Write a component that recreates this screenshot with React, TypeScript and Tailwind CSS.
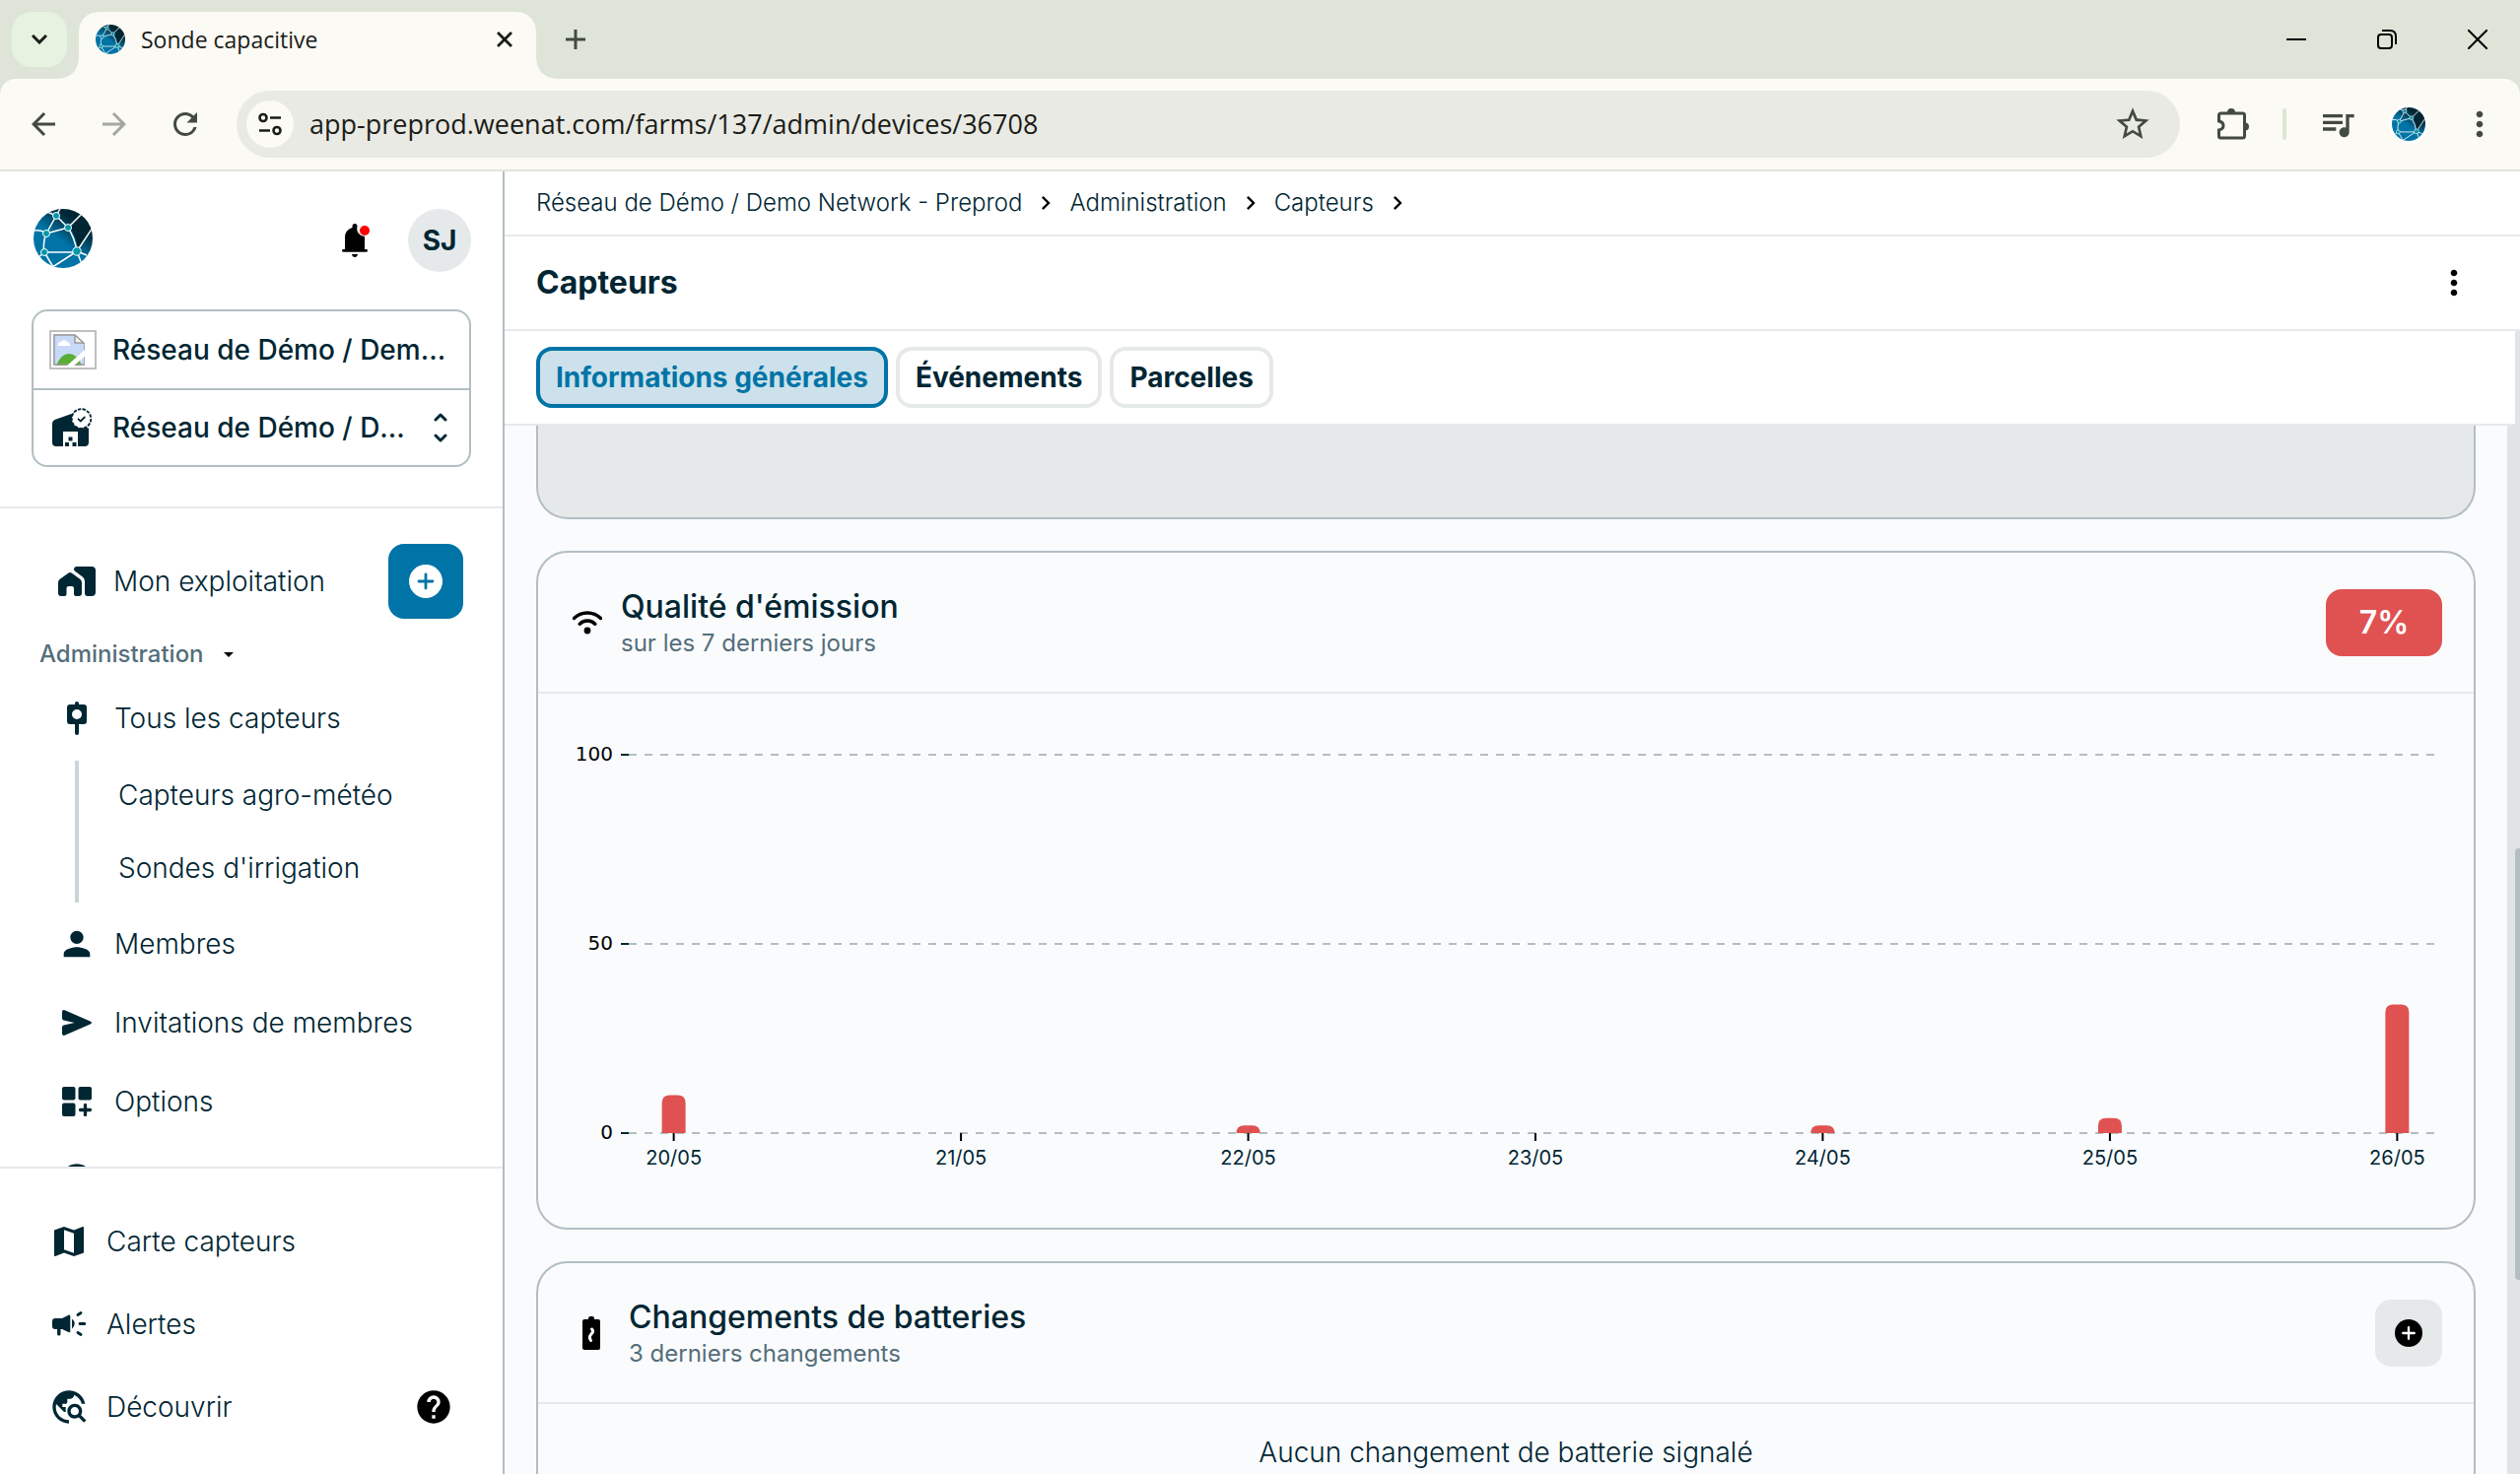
import type { ReactNode } from 'react'
import {
  MdArrowBack,
  MdArrowForward,
  MdChevronRight,
  MdHelp,
  MdMap,
  MdMoreVert,
  MdPerson,
  MdQueueMusic,
  MdRefresh,
  MdStarBorder,
  MdTravelExplore,
} from 'react-icons/md'

const INK = 'text-[#002633]'

function Logo({ id, className }: { id: string; className: string }) {
  return (
    <svg viewBox="0 0 60 60" className={className} aria-hidden="true">
      <defs>
        <linearGradient id={`${id}-fill`} x1="0.3" y1="0.7" x2="0.75" y2="0.1">
          <stop offset="0.3" stopColor="#0074a6" />
          <stop offset="0.85" stopColor="#002633" />
        </linearGradient>
        <clipPath id={`${id}-clip`}>
          <circle cx="30" cy="30" r="30" />
        </clipPath>
      </defs>
      <g clipPath={`url(#${id}-clip)`}>
        <rect width="60" height="60" fill={`url(#${id}-fill)`} />
        <path d="M48 7Q60 14 58 22L45 41Q43 27 38 19z" fill="#002633" />
        <g fill="none" stroke="#fff" strokeWidth="1.500">
          <path d="M23 7L27 0M23 7L13 25M23 7L35 19M13 25L35 19M13 25Q8 21 0 22M13 25Q9 34 11 44M11 44H44M11 44L2 52M11 44L20 59M35 19L48 6M35 19Q42 30 44 43M44 43L62 16M44 43L18 60M44 43L54 47M44 43L49 56M23 7L14 3" />
        </g>
        <g fill="#0097a7" stroke="#fff" strokeWidth="1">
          <circle cx="23" cy="7" r="3.500" />
          <circle cx="35" cy="19" r="3.500" />
          <circle cx="13" cy="25" r="3.500" />
          <circle cx="11" cy="44" r="3.500" />
          <circle cx="44" cy="43" r="4.200" />
        </g>
      </g>
    </svg>
  )
}

function PlusCircle({ className, plus }: { className: string; plus: string }) {
  return (
    <svg viewBox="0 0 34 34" className={className} aria-hidden="true">
      <circle cx="17" cy="17" r="17" fill="currentColor" />
      <path d="M17 10v14M10 17h14" stroke={plus} strokeWidth="2.800" strokeLinecap="round" />
    </svg>
  )
}

function HomeWorkIcon() {
  return (
    <svg viewBox="0 0 38 30" className="h-[30px] w-[38px]" fill="currentColor" aria-hidden="true">
      <path d="M0 16.500q0-2.500 1.800-3.700L10.200 6.700q1.900-1.300 3.800 0l8.200 6.100q1.800 1.200 1.800 3.700V27q0 3-3 3h-3q-2 0-2-2v-6q0-2-2-2h-3.500q-2 0-2 2v6q0 2-2 2H3q-3 0-3-3z" />
      <path d="M16 3q0-3 3-3h15q4 0 4 4v22q0 4-4 4h-4q-3 0-3-3V15q0-3-2.200-4.600L17.500 5Q16 4 16 3z" />
    </svg>
  )
}

function ProbeIcon() {
  return (
    <svg viewBox="0 0 20 34" className="h-[34px] w-5" fill="currentColor" aria-hidden="true">
      <path d="M8 2q0-2 2-2t2 2v1h5q3 0 3 3v14q0 3-3 3h-5v9q0 2-2 2t-2-2v-9H3q-3 0-3-3V6q0-3 3-3h5zM10 8a5 5 0 1 0 0 10a5 5 0 1 0 0-10z" fillRule="evenodd" />
    </svg>
  )
}

function SendIcon() {
  return (
    <svg viewBox="0 0 30 26" className="h-[26px] w-[30px]" fill="currentColor" aria-hidden="true">
      <path d="M0 2.200Q0-.700 2.700.300L28.500 11.500q3 1.500 0 3L2.700 25.700Q0 26.700 0 23.800V17.500q0-1.600 1.600-2L12.500 13 1.600 10.500Q0 10.100 0 8.500z" />
    </svg>
  )
}

function WidgetsIcon() {
  return (
    <svg viewBox="0 0 30 30" className="size-[30px]" fill="currentColor" aria-hidden="true">
      <rect width="13.500" height="13.500" rx="2" />
      <rect x="16.500" width="13.500" height="13.500" rx="2" />
      <rect y="16.500" width="13.500" height="13.500" rx="2" />
      <path d="M23.500 18.500v10M18.500 23.500h10" stroke="currentColor" strokeWidth="3.300" strokeLinecap="round" />
    </svg>
  )
}

function MegaphoneIcon() {
  return (
    <svg viewBox="0 0 34 26" className="h-[26px] w-[34px]" fill="currentColor" aria-hidden="true">
      <path d="M0 10q0-3 3-3h7l6.500-3.300q1.800-.9 1.800 1V20q0 1.900-1.800 1L10 18H8.500v5.500q0 1-1.700 1t-1.700-1V18H3q-3 0-3-3z" />
      <path d="M20 7.500q2.700 2 2.700 5t-2.700 5z" />
      <path d="M26 3.500l3-2M28 12.500h5M26 21.500l3 2" stroke="currentColor" strokeWidth="2.800" strokeLinecap="round" />
    </svg>
  )
}

function BellIcon() {
  return (
    <svg viewBox="0 0 28 34" className="h-[34px] w-7" aria-hidden="true">
      <path d="M1.500 26H3V14Q3 6.500 10.500 4V2.500Q10.500 0 13 0t2.500 2.500V3q-1 4 1.500 7 2.500 3 6 3v13h1.500q1.500 0 1.500 1.400t-1.500 1.400h-23Q0 28.800 0 27.400T1.500 26zM10 31h6q-.5 3-3 3t-3-3z" />
      <circle cx="23" cy="7" r="5" fill="red" />
    </svg>
  )
}

function BarnIcon() {
  return (
    <svg viewBox="0 0 42 40" className="h-10 w-[42px]" aria-hidden="true">
      <path d="M1 16q0-3 2.600-4L19 6.500l4-1 1 6q3 8 14 9V35q0 4-4 4h-7V24H12v15H5q-4 0-4-4z" fill="#002633" />
      <path d="M17.500 29.500h4v4h-4zM14 35h4v4h-4zM21.500 35h4v4h-4z" fill="#002633" />
      <circle cx="30.500" cy="11" r="9.800" fill="#fff" stroke="#002633" strokeWidth="1.800" strokeDasharray="3.400 1.300" />
      <path d="M27.500 11.300l2.300 2.200 4-4" fill="none" stroke="#002633" strokeWidth="1.800" strokeLinecap="round" />
    </svg>
  )
}

function BrokenImage() {
  return (
    <span className="flex h-10 w-12 shrink-0 border-2 border-[#c0c0c0] p-0.5">
      <svg viewBox="0 0 32 32" className="size-8" aria-hidden="true">
        <path d="M0 0h22l10 10v22H0z" fill="#c8daf7" />
        <path d="M3 32q5-12 13-12t13 12z" fill="#5aad35" />
        <path d="M5 12q-1-4 3-4 3-4 6 0 3 0 3 4z" fill="#fff" />
        <path d="M22 1v8h9z" fill="#f4f4f4" />
        <path d="M32 31V10L22 1H1v30h31M22 1v8h9" fill="none" stroke="#9a9a9a" strokeWidth="1.500" />
        <path d="M13 33L33 15v7L20 33z" fill="#fff" />
      </svg>
    </span>
  )
}

function WifiIcon() {
  return (
    <svg viewBox="0 0 30 24" className="h-6 w-[30px]" aria-hidden="true">
      <path d="M1.500 7.500Q7 2 15 2t13.500 5.500M7.200 13.300Q10 10 15 10t7.800 3.300" fill="none" stroke="#000" strokeWidth="3.400" strokeLinecap="round" />
      <circle cx="15" cy="20" r="3.400" />
    </svg>
  )
}

function BatteryIcon() {
  return (
    <svg viewBox="0 0 18 34" className="h-[34px] w-[18px]" aria-hidden="true">
      <path d="M6 2q0-2 2-2h2q2 0 2 2v1h4q2 0 2 2v27q0 2-2 2H2q-2 0-2-2V5q0-2 2-2h4z" />
      <path d="M9.500 13q2.500 2-.5 5t-.5 6.500" fill="none" stroke="#fff" strokeWidth="3" strokeLinecap="round" />
    </svg>
  )
}

function TabStrip() {
  return (
    <div className="flex h-20 items-end pl-3 font-['Open_Sans','Noto_Sans',sans-serif] text-[#1b1c18]">
      <button aria-label="Rechercher dans les onglets" className="mb-3 flex size-14 items-center justify-center rounded-[20px] bg-[#e6f3e1]">
        <svg viewBox="0 0 16 10" className="h-2.5 w-4" fill="none" stroke="currentColor" strokeWidth="3" aria-hidden="true">
          <path d="M1 1l7 7 7-7" />
        </svg>
      </button>
      <div className="relative ml-3 flex h-[68px] w-[464px] items-center rounded-t-[20px] bg-[#fbfaf5] pb-3 pl-[17px] pr-6">
        <svg viewBox="0 0 24 24" className="absolute -left-6 bottom-0 size-6" fill="#fbfaf5" aria-hidden="true">
          <path d="M24 0v24H0Q24 24 24 0z" />
        </svg>
        <svg viewBox="0 0 24 24" className="absolute -right-6 bottom-0 size-6" fill="#fbfaf5" aria-hidden="true">
          <path d="M0 0v24h24Q0 24 0 0z" />
        </svg>
        <Logo id="favicon" className="size-[30px]" />
        <span className="ml-4 flex-1 text-[23px] leading-8">Sonde capacitive</span>
        <button aria-label="Fermer l'onglet">
          <svg viewBox="0 0 16 16" className="size-4" stroke="currentColor" strokeWidth="2.800" aria-hidden="true">
            <path d="M1 1l14 14M15 1L1 15" />
          </svg>
        </button>
      </div>
      <button aria-label="Nouvel onglet" className="mb-[30px] ml-[30px] text-[#434a42]">
        <svg viewBox="0 0 20 20" className="size-5" stroke="currentColor" strokeWidth="3" aria-hidden="true">
          <path d="M10 0v20M0 10h20" />
        </svg>
      </button>
      <div className="mb-[30px] ml-auto mr-[33px] flex items-center gap-[72px] text-black">
        <button aria-label="Réduire">
          <svg viewBox="0 0 20 20" className="size-5" stroke="currentColor" strokeWidth="2" aria-hidden="true">
            <path d="M0 10h20" />
          </svg>
        </button>
        <button aria-label="Restaurer">
          <svg viewBox="0 0 20 20" className="size-5" fill="none" stroke="currentColor" strokeWidth="2" aria-hidden="true">
            <rect x="1" y="5" width="14" height="14" rx="3" />
            <path d="M5 1h8q6 0 6 6v8" />
          </svg>
        </button>
        <button aria-label="Fermer">
          <svg viewBox="0 0 20 20" className="size-5" stroke="currentColor" strokeWidth="2" aria-hidden="true">
            <path d="M0 0l20 20M20 0L0 20" />
          </svg>
        </button>
      </div>
    </div>
  )
}

function Toolbar() {
  return (
    <div className="flex h-[94px] items-center rounded-t-[16px] border-b-2 border-[#e3e3df] bg-[#fbfaf5] pr-[21px] text-[#434a42]">
      <div className="flex items-center gap-9 pl-[26px]">
        <button aria-label="Précédent"><MdArrowBack className="size-9" /></button>
        <button aria-label="Suivant" className="text-[#a5a6a2]"><MdArrowForward className="size-9" /></button>
        <button aria-label="Actualiser"><MdRefresh className="size-9" /></button>
      </div>
      <div className="ml-[34px] flex h-[68px] flex-1 items-center rounded-full bg-[#e9eae4] pl-2.5 pr-7">
        <button aria-label="Informations sur le site" className="flex size-12 items-center justify-center rounded-full bg-[#fbfaf5] text-[#1b1c18]">
          <svg viewBox="0 0 24 24" className="size-6" fill="none" stroke="currentColor" strokeWidth="2.600" aria-hidden="true">
            <circle cx="5" cy="5.500" r="3.500" />
            <circle cx="19" cy="18.500" r="3.500" />
            <path d="M12 5.500h11M1 18.500h11" />
          </svg>
        </button>
        <input
          aria-label="Adresse"
          defaultValue="app-preprod.weenat.com/farms/137/admin/devices/36708"
          className="ml-4 flex-1 bg-transparent font-['Open_Sans','Noto_Sans',sans-serif] text-[27px] leading-10 text-[#1b1c18] outline-none"
        />
        <button aria-label="Ajouter aux favoris"><MdStarBorder className="size-10" /></button>
      </div>
      <button aria-label="Extensions" className="ml-[38px]">
        <svg viewBox="0 0 32 32" className="size-8" fill="none" stroke="currentColor" strokeWidth="3" aria-hidden="true">
          <path d="M1.500 13V7q0-2 2-2h22q2 0 2 2v21q0 2-2 2h-22q-2 0-2-2v-6q4.500-1 4.500-4.500T1.500 13z" />
          <path d="M10 4a4 4 0 0 1 8 0zM28 14.500a4 4 0 0 1 0 8z" fill="currentColor" stroke="none" />
        </svg>
      </button>
      <span className="ml-[34px] h-8 w-1 rounded-full bg-[#dbe6d5]" />
      <button aria-label="Médias" className="ml-8"><MdQueueMusic className="size-10" /></button>
      <button aria-label="Profil" className="ml-8 rounded-full bg-white p-[3px]">
        <Logo id="profile" className="size-[34px]" />
      </button>
      <button aria-label="Menu" className="ml-8"><MdMoreVert className="size-10" /></button>
    </div>
  )
}

function NavItem({ icon, label }: { icon: ReactNode; label: string }) {
  return (
    <a href="#" className="flex h-20 items-center pl-[58px]">
      <span className="flex w-10 justify-center">{icon}</span>
      <span className="ml-[18px]">{label}</span>
    </a>
  )
}

const FOOTER_LINKS = [
  { label: 'Carte capteurs', icon: <MdMap className="size-10" /> },
  { label: 'Alertes', icon: <MegaphoneIcon /> },
  { label: 'Découvrir', icon: <MdTravelExplore className="size-10" /> },
]

function Sidebar() {
  return (
    <aside className={`flex w-[512px] shrink-0 flex-col border-r-2 border-[#b2bec3] bg-white ${INK}`}>
      <div className="border-b-2 border-[#e6e9ea] px-8 pb-10 pt-[38px]">
        <div className="flex items-center">
          <Logo id="brand" className="ml-0.5 size-[60px] self-start" />
          <button aria-label="Notifications" className="ml-auto"><BellIcon /></button>
          <button className="ml-[39px] size-16 rounded-full bg-[#e6e9ea] text-[28px] font-bold">SJ</button>
        </div>
        <div className="mt-[38px] divide-y-2 divide-[#b2bec3] rounded-[16px] border-2 border-[#b2bec3] text-[28px] font-medium leading-9">
          <button className="flex h-20 w-full items-center pl-4 pr-2 text-left">
            <BrokenImage />
            <span className="ml-4 w-[348px] truncate">Réseau de Démo / Demo Network - Preprod</span>
          </button>
          <button className="flex h-[76px] w-full items-center pl-[18px] pr-[22px] text-left">
            <BarnIcon />
            <span className="ml-5 w-[300px] truncate">Réseau de Démo / Demo Network</span>
            <svg viewBox="0 0 14 30" className="ml-auto h-[30px] w-3.5" fill="none" stroke="currentColor" strokeWidth="3" strokeLinecap="round" strokeLinejoin="round" aria-hidden="true">
              <path d="M2 7l5-5 5 5M2 23l5 5 5-5" />
            </svg>
          </button>
        </div>
      </div>

      <nav className="min-h-0 flex-1 overflow-hidden pt-9 text-[28px] font-light leading-9">
        <div className="flex h-[76px] items-center pl-[59px] pr-10">
          <a href="#" className="flex items-center">
            <HomeWorkIcon />
            <span className="ml-[18px]">Mon exploitation</span>
          </a>
          <button aria-label="Ajouter" className="ml-auto flex size-[76px] items-center justify-center rounded-[16px] bg-[#0074a6] text-white">
            <PlusCircle className="size-[34px]" plus="#0074a6" />
          </button>
        </div>
        <button className="flex h-[72px] items-center gap-5 pl-10 text-[24px] font-medium text-[#546e7a]">
          Administration
          <svg viewBox="0 0 10 5" className="h-[5px] w-2.5" aria-hidden="true"><path d="M0 0h10L5 5z" /></svg>
        </button>
        <a href="#" className="flex h-[58px] items-center pl-[58px]">
          <span className="flex w-10 justify-center"><ProbeIcon /></span>
          <span className="ml-[18px]">Tous les capteurs</span>
        </a>
        <div className="mb-0.5 ml-[76px] mt-3.5 flex h-36 flex-col justify-between border-l-4 border-[#ccd4d7] pl-10">
          <a href="#" className="flex h-[70px] items-center">Capteurs agro-météo</a>
          <a href="#" className="flex h-[70px] items-center">Sondes d'irrigation</a>
        </div>
        <NavItem icon={<MdPerson className="size-[42px]" />} label="Membres" />
        <NavItem icon={<SendIcon />} label="Invitations de membres" />
        <NavItem icon={<WidgetsIcon />} label="Options" />
        <a href="#" aria-label="Aide" className="flex h-20 items-center pl-[58px]">
          <MdHelp className="size-10" />
        </a>
      </nav>

      <div className="border-t-2 border-[#e6e9ea] pb-[26px] pt-8 text-[28px] font-light leading-9">
        {FOOTER_LINKS.map(({ label, icon }) => (
          <div key={label} className="flex h-[84px] items-center px-[50px]">
            <a href="#" className="flex items-center">
              <span className="flex w-10 justify-center">{icon}</span>
              <span className="ml-[18px]">{label}</span>
            </a>
            {label === 'Découvrir' && (
              <button aria-label="Aide" className="ml-auto text-black"><MdHelp className="size-10" /></button>
            )}
          </div>
        ))}
      </div>
    </aside>
  )
}

const CRUMBS = ['Réseau de Démo / Demo Network - Preprod', 'Administration', 'Capteurs']

const TABS = [
  { label: 'Informations générales', className: 'border-[#0074a6] bg-[#cce1eb] text-[#0074a6]' },
  { label: 'Événements', className: 'border-[#e6e9ea] bg-white' },
  { label: 'Parcelles', className: 'border-[#e6e9ea] bg-white' },
]

function PageHeader() {
  return (
    <header className="bg-white">
      <div className="flex h-[66px] items-center border-b-2 border-[#e6e9ea] pl-8 text-[24px] font-light">
        {CRUMBS.map((crumb) => (
          <span key={crumb} className="flex items-center">
            <a href="#">{crumb}</a>
            <MdChevronRight className="mx-2.5 size-7 text-black" />
          </span>
        ))}
      </div>
      <div className="flex h-24 items-center justify-between border-b-2 border-[#e6e9ea] pl-8 pr-[47px]">
        <h1 className="text-[32px] font-bold">Capteurs</h1>
        <button aria-label="Actions" className="text-black"><MdMoreVert className="size-10" /></button>
      </div>
      <div className="flex">
        <div className="flex h-24 flex-1 items-center gap-2 border-b-2 border-[#e6e9ea] pl-8">
          {TABS.map(({ label, className }) => (
            <button key={label} className={`h-[62px] rounded-[16px] border-4 px-4 text-[28px] font-bold ${className}`}>
              {label}
            </button>
          ))}
        </div>
        <div className="w-[5px] bg-[#e1e4e5]" />
      </div>
    </header>
  )
}

function CardHeader({ icon, title, subtitle, action }: { icon: ReactNode; title: string; subtitle: string; action: ReactNode }) {
  return (
    <div className="flex h-[143px] items-center border-b-2 border-[#e6e9ea] px-8">
      {icon}
      <div className="flex-1 pt-0.5">
        <h2 className="text-[32px] font-medium leading-10">{title}</h2>
        <p className="text-[24px] leading-[34px] text-[#546e7a]">{subtitle}</p>
      </div>
      {action}
    </div>
  )
}

const QUALITY = [
  { day: '20/05', value: 10 },
  { day: '21/05', value: 0 },
  { day: '22/05', value: 2 },
  { day: '23/05', value: 0 },
  { day: '24/05', value: 2 },
  { day: '25/05', value: 4 },
  { day: '26/05', value: 34 },
]

const PLOT_HEIGHT = 384
const FIRST_BAR = 2.48
const BAR_STEP = 15.84

function barPath(height: number) {
  const r = Math.min(8, height)
  return `M-12 0V${r - height}Q-12 ${-height} ${r - 12} ${-height}H${12 - r}Q12 ${-height} 12 ${r - height}V0z`
}

function QualityChart() {
  return (
    <div className="px-8 pb-24 pt-[62px]">
      <svg className="ml-[60px] block h-96 w-[calc(100%-60px)] overflow-visible" role="img" aria-label="Qualité d'émission par jour">
        {[100, 50, 0].map((level) => {
          const y = PLOT_HEIGHT * (1 - level / 100)
          return (
            <g key={level}>
              <line x1="0" x2="100%" y1={y} y2={y} stroke="#b2bec3" strokeWidth="2" strokeDasharray="8 8" />
              <line x1="-8" x2="0" y1={y} y2={y} stroke="#002633" strokeWidth="2" />
              <text x="-16" y={y + 6} textAnchor="end" fill="#000" className="font-['DejaVu_Sans',sans-serif] text-[20px]">{level}</text>
            </g>
          )
        })}
        {QUALITY.map(({ day, value }, i) => (
          <svg key={day} x={`${FIRST_BAR + i * BAR_STEP}%`} y={PLOT_HEIGHT} className="overflow-visible">
            {value > 0 && <path d={barPath(value * 3.84)} fill="#e05252" />}
            <line y1="0" y2="8" stroke="#000" strokeWidth="2" />
            <text y="32" textAnchor="middle" fill="#002633" className="text-[20px]">{day}</text>
          </svg>
        ))}
      </svg>
    </div>
  )
}

const CARD = 'rounded-[32px] border-2 border-[#b2bec3]'

export default function App() {
  return (
    <div className="flex h-screen flex-col overflow-hidden bg-[#dfe4d9] font-[Inter,sans-serif]">
      <TabStrip />
      <Toolbar />
      <div className="flex min-h-0 flex-1">
        <Sidebar />
        <div className={`flex min-w-0 flex-1 flex-col ${INK}`}>
          <PageHeader />
          <div className="flex min-h-0 flex-1 bg-[#fafbfd]">
            <main className="flex-1 space-y-8 overflow-hidden px-8">
              <div className="h-[95px] rounded-b-[32px] border-2 border-t-0 border-[#b2bec3] bg-[#e6e9ea]" />
              <section className={CARD}>
                <CardHeader
                  icon={<span className="mr-[19px] pl-[3px]"><WifiIcon /></span>}
                  title="Qualité d'émission"
                  subtitle="sur les 7 derniers jours"
                  action={<span className="w-[118px] rounded-[16px] bg-[#e05252] py-3.5 text-center text-[32px] font-semibold leading-10 text-white">7%</span>}
                />
                <QualityChart />
              </section>
              <section className={CARD}>
                <CardHeader
                  icon={<span className="mr-[29px] pl-[13px]"><BatteryIcon /></span>}
                  title="Changements de batteries"
                  subtitle="3 derniers changements"
                  action={
                    <button aria-label="Ajouter un changement" className="flex size-[68px] items-center justify-center rounded-[16px] bg-[#e6e9ea] text-black">
                      <PlusCircle className="size-7" plus="#fff" />
                    </button>
                  }
                />
                <p className="py-8 text-center text-[28px] font-light leading-[34px]">Aucun changement de batterie signalé</p>
              </section>
            </main>
            <div className="w-[13px] bg-[#e1e4e5] pl-2 pt-[429px]">
              <div className="h-[438px] rounded-l-[4px] bg-[#b2bec3]" />
            </div>
          </div>
        </div>
      </div>
    </div>
  )
}
